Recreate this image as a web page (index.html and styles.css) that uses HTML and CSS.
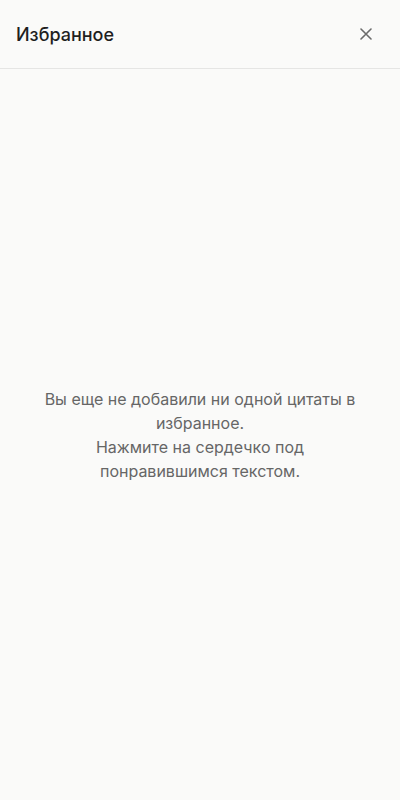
FILE: index.html
```html
<!DOCTYPE html>
<html lang="ru">
<head>
<meta charset="utf-8">
<link rel="stylesheet" href="styles.css">
</head>
<body>
<div class="page">
  <header class="header">
    <h1 class="title">Избранное</h1>
    <button class="close" aria-label="Закрыть">
      <svg width="12" height="12" viewBox="0 0 12 12"><path d="M1 1L11 11M11 1L1 11" stroke="#6b6b6b" stroke-width="1.6" stroke-linecap="round"/></svg>
    </button>
  </header>
  <main class="empty">
    <p class="message">Вы еще не добавили ни одной цитаты в избранное.<br>Нажмите на сердечко под понравившимся текстом.</p>
  </main>
</div>
</body>
</html>
```
FILE: styles.css
```css
html, body {
  margin: 0;
  padding: 0;
  background: #fafaf9;
  font-family: Inter, "Noto Sans", sans-serif;
}
.page {
  display: flex;
  flex-direction: column;
  height: 800px;
}
.header {
  height: 69px;
  box-sizing: border-box;
  display: flex;
  align-items: center;
  justify-content: space-between;
  padding: 0 16px;
  border-bottom: 1px solid #e5e5e4;
}
.title {
  margin: 0;
  font-size: 18px;
  font-weight: 500;
  color: #1f1f1f;
}
.close {
  width: 24px;
  height: 24px;
  margin-right: 6px;
  padding: 0;
  border: none;
  background: none;
  display: flex;
  align-items: center;
  justify-content: center;
}
.empty {
  flex: 1;
  display: flex;
  align-items: center;
  justify-content: center;
  padding: 0 40px;
}
.message {
  margin: 0;
  text-align: center;
  font-size: 16px;
  line-height: 24px;
  color: #666666;
}
```
